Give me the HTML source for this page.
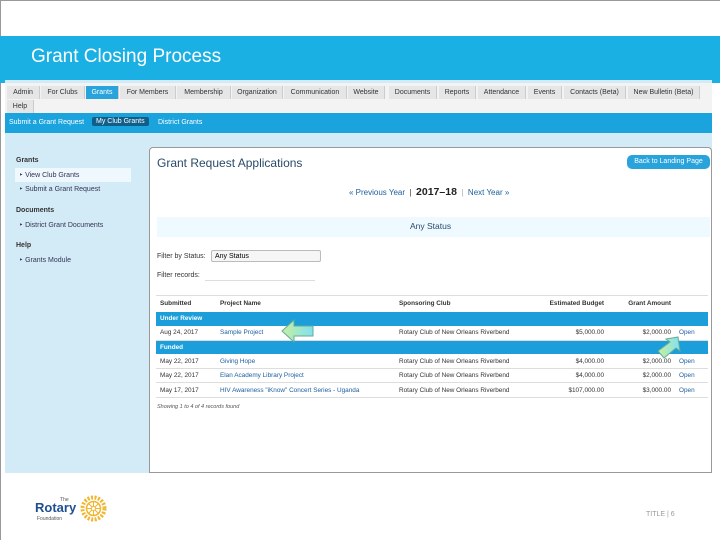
<!DOCTYPE html>
<html><head><style>
*{margin:0;padding:0;box-sizing:border-box}
body{width:720px;height:540px;background:#fff;font-family:"Liberation Sans",sans-serif;position:relative;overflow:hidden}
.a{position:absolute}
.tab{position:absolute;top:86px;height:13px;background:#e6e6e6;border-right:1px solid #ccc;font-size:7px;color:#333;line-height:13px;text-align:center}
.sm{font-size:7px}
td,th{font-size:6.4px;padding:0 4px;height:14.3px;white-space:nowrap;color:#333;overflow:hidden}
table{border-collapse:collapse;width:552px;table-layout:fixed}
tr.r td{border-bottom:1px solid #ddd}
.l{color:#1d5fa0}
.g td{background:#1b9ed9;color:#fff;font-weight:bold}
</style></head><body>
<div class="a" style="left:0;top:0;width:720px;height:1px;background:#999"></div>
<div class="a" style="left:0;top:0;width:1px;height:540px;background:#999"></div>
<div class="a" style="left:0;top:36px;width:720px;height:47px;background:#1ab0e4"></div>
<div class="a" style="left:31px;top:46px;font-size:19px;color:#fff">Grant Closing Process</div>
<div class="a" style="left:5px;top:80px;width:707px;height:393px;background:#d3ebf6"></div>
<div class="a" style="left:5px;top:83px;width:707px;height:30px;background:#f3f3f3"></div>
<div class="tab" style="left:7px;width:33px">Admin</div>
<div class="tab" style="left:41px;width:44px">For Clubs</div>
<div class="tab" style="left:86px;width:33px;background:#29a3dc;color:#fff">Grants</div>
<div class="tab" style="left:120px;width:56px">For Members</div>
<div class="tab" style="left:177px;width:54px">Membership</div>
<div class="tab" style="left:232px;width:51px">Organization</div>
<div class="tab" style="left:284px;width:63px">Communication</div>
<div class="tab" style="left:348px;width:37px">Website</div>
<div class="tab" style="left:389px;width:48px">Documents</div>
<div class="tab" style="left:439px;width:37px">Reports</div>
<div class="tab" style="left:478px;width:48px">Attendance</div>
<div class="tab" style="left:528px;width:34px">Events</div>
<div class="tab" style="left:564px;width:62px">Contacts (Beta)</div>
<div class="tab" style="left:628px;width:72px">New Bulletin (Beta)</div>
<div class="tab" style="left:7px;top:100px;width:27px">Help</div>
<div class="a" style="left:5px;top:113px;width:707px;height:20px;background:#1ba3de"></div>
<div class="a sm" style="left:9px;top:119px;color:#fff">Submit a Grant Request</div>
<div class="a sm" style="left:92px;top:117px;color:#fff;background:#0f5f8a;padding:1px 4px;border-radius:2px">My Club Grants</div>
<div class="a sm" style="left:158px;top:119px;color:#fff">District Grants</div>
<div class="a sm" style="left:16px;top:157px;font-weight:bold;color:#333">Grants</div>
<div class="a" style="left:15px;top:168px;width:116px;height:14px;background:#eef8fd"></div>
<div class="a sm" style="left:19px;top:171px;color:#335">‣ View Club Grants</div>
<div class="a sm" style="left:19px;top:185px;color:#335">‣ Submit a Grant Request</div>
<div class="a sm" style="left:16px;top:207px;font-weight:bold;color:#333">Documents</div>
<div class="a sm" style="left:19px;top:221px;color:#335">‣ District Grant Documents</div>
<div class="a sm" style="left:16px;top:242px;font-weight:bold;color:#333">Help</div>
<div class="a sm" style="left:19px;top:256px;color:#335">‣ Grants Module</div>
<div class="a" style="left:149px;top:147px;width:563px;height:326px;background:#fff;border:1px solid #999;border-radius:4px 4px 0 0"></div>
<div class="a" style="left:157px;top:156px;font-size:12px;color:#2a4a6a">Grant Request Applications</div>
<div class="a sm" style="left:627px;top:155px;width:83px;height:14px;background:#29a3dc;color:#fff;border-radius:5px;text-align:center;line-height:14px">Back to Landing Page</div>
<div class="a" style="left:349px;top:186px;font-size:8px;color:#1d5fa0">« Previous Year <span style="color:#333">&nbsp;|&nbsp;</span> <b style="font-size:10.5px;color:#222">2017–18</b> <span style="color:#aaa">&nbsp;|&nbsp;</span> Next Year »</div>
<div class="a" style="left:157px;top:217px;width:553px;height:20px;background:#eefaff"></div>
<div class="a" style="left:410px;top:221px;font-size:8.5px;color:#2a4a6a">Any Status</div>
<div class="a sm" style="left:157px;top:253px;color:#333">Filter by Status:</div>
<div class="a sm" style="left:211px;top:250px;width:110px;height:12px;border:1px solid #bbb;border-radius:2px;background:#f6f6f6;padding-left:3px;line-height:11px">Any Status</div>
<div class="a sm" style="left:157px;top:272px;color:#333">Filter records:</div>
<div class="a" style="left:205px;top:269px;width:110px;height:12px;border-bottom:1px solid #ddd"></div>
<div class="a" style="left:156px;top:295px">
<table>
<colgroup><col style="width:60px"><col style="width:179px"><col style="width:148px"><col style="width:65px"><col style="width:67px"><col style="width:33px"></colgroup>
<tr style="border-top:1px solid #ddd"><th align="left" style="height:16px">Submitted</th><th align="left">Project Name</th><th align="left">Sponsoring Club</th><th align="right">Estimated Budget</th><th align="right">Grant Amount</th><th></th></tr>
<tr class="g"><td colspan="6">Under Review</td></tr>
<tr class="r"><td>Aug 24, 2017</td><td class="l">Sample Project</td><td>Rotary Club of New Orleans Riverbend</td><td align="right">$5,000.00</td><td align="right">$2,000.00</td><td class="l">Open</td></tr>
<tr class="g"><td colspan="6">Funded</td></tr>
<tr class="r"><td>May 22, 2017</td><td class="l">Giving Hope</td><td>Rotary Club of New Orleans Riverbend</td><td align="right">$4,000.00</td><td align="right">$2,000.00</td><td class="l">Open</td></tr>
<tr class="r"><td>May 22, 2017</td><td class="l">Elan Academy Library Project</td><td>Rotary Club of New Orleans Riverbend</td><td align="right">$4,000.00</td><td align="right">$2,000.00</td><td class="l">Open</td></tr>
<tr class="r"><td>May 17, 2017</td><td class="l">HIV Awareness "iKnow" Concert Series - Uganda</td><td>Rotary Club of New Orleans Riverbend</td><td align="right">$107,000.00</td><td align="right">$3,000.00</td><td class="l">Open</td></tr>
</table></div>
<div class="a" style="left:157px;top:404px;font-size:5.5px;font-style:italic;color:#555">Showing 1 to 4 of 4 records found</div>
<svg class="a" style="left:280px;top:318px" width="36" height="26"><defs><linearGradient id="g1" x1="0" x2="1"><stop offset="0" stop-color="#c8f0a0"/><stop offset="1" stop-color="#80e0f0"/></linearGradient></defs><path d="M2 13 L14 2 L14 8 L33 8 L33 18 L14 18 L14 24 Z" fill="url(#g1)" stroke="#6a9" stroke-width="1"/></svg>
<svg class="a" style="left:656px;top:335px" width="26" height="24"><path d="M22 2 L24 16 L20 13 L8 23 L2 16 L14 7 L10 4 Z" fill="url(#g1)" stroke="#6a9" stroke-width="1"/></svg>
<div class="a" style="left:60px;top:497px;font-size:5px;color:#555">The</div>
<div class="a" style="left:35px;top:500px;font-size:13px;font-weight:bold;color:#1d4f91">Rotary</div>
<div class="a" style="left:37px;top:516px;font-size:5px;color:#555">Foundation</div>
<svg class="a" style="left:80px;top:495px" width="27" height="27"><circle cx="13.5" cy="13.5" r="11" fill="none" stroke="#f2b52c" stroke-width="4" stroke-dasharray="2 1.5"/><circle cx="13.5" cy="13.5" r="7" fill="none" stroke="#f2b52c" stroke-width="1.5"/><path d="M13.5 6v15M6 13.5h15M8 8l11 11M19 8L8 19" stroke="#f2b52c" stroke-width="1"/><circle cx="13.5" cy="13.5" r="2" fill="#fff" stroke="#f2b52c"/></svg>
<div class="a" style="left:646px;top:511px;font-size:7px;color:#999">TITLE | 6</div>
</body></html>
